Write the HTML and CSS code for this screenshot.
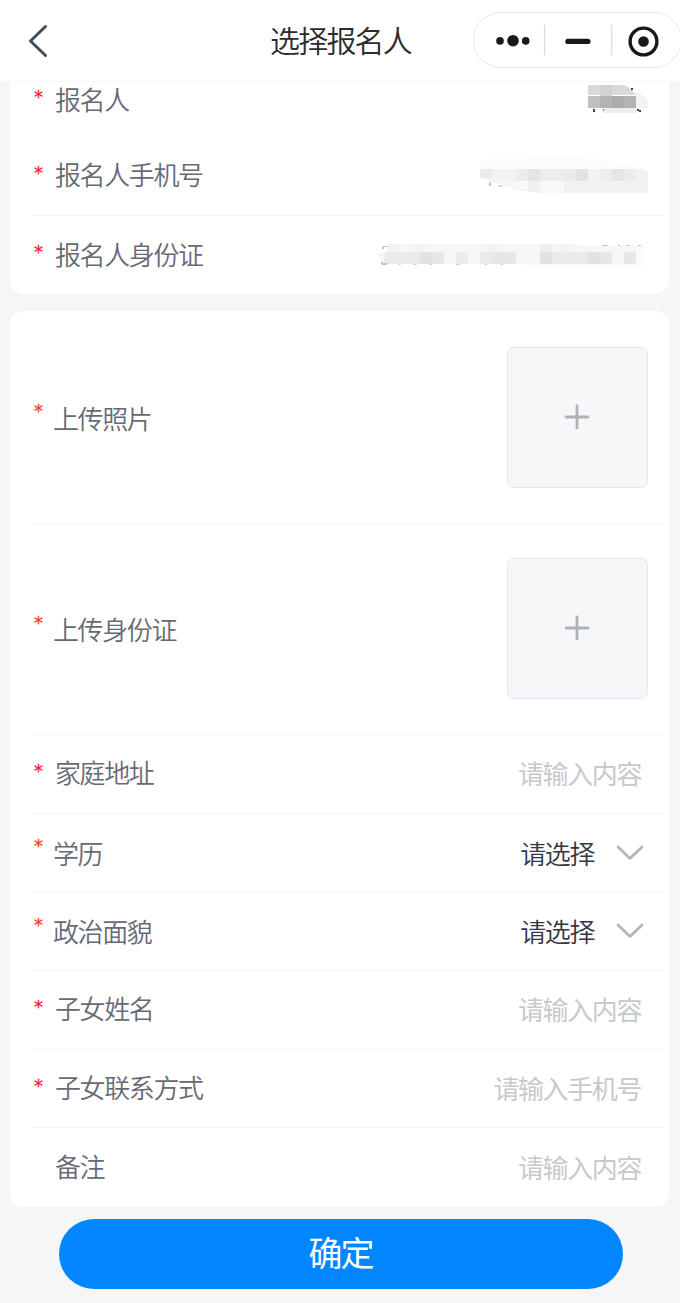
FILE: index.html
```html
<!DOCTYPE html>
<html lang="zh-CN">
<head>
<meta charset="utf-8">
<title>选择报名人</title>
<link rel="stylesheet" href="styles.css">
</head>
<body>
<header class="navbar">
  <svg class="back" width="22" height="36" viewBox="0 0 22 36" fill="none"><path d="M18.5 3.5 3.5 18 18.5 32.5" stroke="#414c5b" stroke-width="3" stroke-linecap="round" stroke-linejoin="round"/></svg>
  <h1 class="title">选择报名人</h1>
  <div class="capsule">
    <svg width="210" height="56" viewBox="0 0 210 56">
      <rect x=".5" y=".5" width="208" height="55" rx="27.5" fill="#fff" stroke="#e9e9e9"/>
      <g fill="#191919"><circle cx="27" cy="28.9" r="3.8"/><circle cx="40" cy="28.7" r="5.8"/><circle cx="52.7" cy="28.9" r="3.8"/><rect x="92.3" y="26.8" width="25.2" height="5.2" rx="2.6"/><circle cx="170.5" cy="29.5" r="5.3"/></g>
      <path d="M71.5 13v30M138.7 13v30" stroke="#d9d9d9" stroke-width="1.2"/>
      <circle cx="170.5" cy="29.5" r="13.4" fill="none" stroke="#191919" stroke-width="3.4"/>
    </svg>
  </div>
</header>
<main class="page">
  <section class="card card-top">
    <div class="row row-first"><span class="star">*</span><span class="label">报名人</span>
      <svg class="mask mask-name" width="60" height="30" viewBox="0 0 60 30" shape-rendering="crispEdges">
        <path d="M0 1h36l6 3 6 7H0z" fill="#d9d9d9"/><path d="M12 1h12v11H12z" fill="#d2d2d2"/><path d="M48 8l8 4 4 6v6H48z" fill="#f3f3f3"/>
        <path d="M0 12h12v12H0z" fill="#c0c0c0"/><path d="M12 12h12v12H12zM36 12h12v12H36z" fill="#b3b3b3"/><path d="M24 12h12v12H24z" fill="#adadad"/>
        <path d="M16 24h33v5H16z" fill="#ededed"/><path d="M5 25h2v3H5zM43 4h2v2h-2zM49 25h2v1h2v2h-2v-1h-2z" fill="#444"/><path d="M15 25h1v2h-1z" fill="#777"/>
      </svg>
    </div>
    <div class="row row-phone"><span class="star">*</span><span class="label">报名人手机号</span>
      <svg class="mask mask-phone" width="168" height="38" viewBox="0 0 168 38" shape-rendering="crispEdges">
        <path d="M0 13V7l5-4 45-1 6-2h30l36 3 6 3 36 5v2z" fill="#fcfcfc"/>
        <path d="M0 13h162l6 3v21H60l-22-3-18-6-13-4-7-2z" fill="#f1f2f2"/>
        <path d="M0 13h12v9H0zM84 13h12v12H84z" fill="#ebebeb"/><path d="M36 13h12v12H36zM144 13h12v12h-12z" fill="#ececec"/><path d="M48 13h12v12H48zM132 13h12v12h-12z" fill="#e5e5e6"/><path d="M60 13h24v12H60zM120 13h12v12h-12z" fill="#ebedee"/><path d="M96 13h12v12H96z" fill="#e2e3e6"/>
        <path d="M20 25h28v9l-12-2-14-5zM60 25h24v12H60z" fill="#f8f8f8"/><path d="M48 25h12v12l-12-2z" fill="#eef1f0"/>
        <path d="M9 26h2v4H9z" fill="#c4c5cb"/><path d="M18 29h3v1h2v1h-4z" fill="#d6d7da"/>
      </svg>
    </div>
    <div class="row row-id"><span class="star">*</span><span class="label">报名人身份证</span>
      <svg class="mask mask-id" width="268" height="25" viewBox="0 0 268 25" shape-rendering="crispEdges">
        <path d="M10 1h190l3 2h64v20H148v-2H10l-7-5-3-6h10z" fill="#f5f6f6"/>
        <path d="M7 9h36v12H7z" fill="#eaebec"/><path d="M10 1h9v8h-9zM36 1h12v8H36zM108 1h12v8h-12zM180 1h12v8h-12z" fill="#f1f2f2"/><path d="M163 1h12v8h-12z" fill="#eeeeef"/>
        <path d="M43 9h12v12H43zM163 9h12v12h-12zM211 9h12v12h-12z" fill="#e1e2e5"/><path d="M55 9h12v12H55zM115 9h24v12h-24zM223 9h12v12h-12zM247 9h12v12h-12z" fill="#e6e7e9"/><path d="M79 9h12v12H79zM103 9h12v12h-12zM175 9h36v12h-36z" fill="#ebebed"/><path d="M148 21h119v4H148z" fill="#fbfbfb"/><path d="M259 4h8v18h-8z" fill="#fafafa"/>
        <path d="M6 3h4v1H7v2H5V4zM4 19h2v1h4v2H5zM225 2h6v1h-6zM241 2h2v1h-2zM249 2h3v1h-3zM261 2h3v1h-3z" fill="#bfc0c5"/><path d="M21 21h3v1h-3zM36 21h4v1h-4zM52 21h3v1h-3zM79 21h4v1h-4zM107 21h3v1h-3zM123 21h3v1h-3z" fill="#d4d4d7"/>
      </svg>
    </div>
  </section>
  <section class="card card-form">
    <div class="row upload-row upload-photo alt"><span class="star">*</span><span class="label">上传照片</span><div class="upload"><svg width="26" height="26" viewBox="0 0 26 26"><path d="M13 2v22M2 13h22" stroke="#afb3b7" stroke-width="2.8" stroke-linecap="round"/></svg></div></div>
    <div class="row upload-row alt"><span class="star">*</span><span class="label">上传身份证</span><div class="upload"><svg width="26" height="26" viewBox="0 0 26 26"><path d="M13 2v22M2 13h22" stroke="#afb3b7" stroke-width="2.8" stroke-linecap="round"/></svg></div></div>
    <div class="row"><span class="star">*</span><span class="label">家庭地址</span><span class="placeholder">请输入内容</span></div>
    <div class="row select-row alt"><span class="star">*</span><span class="label">学历</span><span class="choice">请选择</span><svg class="chevron" width="28" height="18" viewBox="0 0 28 18"><path d="M2 3 14 14.5 26 3" fill="none" stroke="#b5b6b8" stroke-width="2.8" stroke-linecap="round" stroke-linejoin="round"/></svg></div>
    <div class="row select-row alt"><span class="star">*</span><span class="label">政治面貌</span><span class="choice">请选择</span><svg class="chevron" width="28" height="18" viewBox="0 0 28 18"><path d="M2 3 14 14.5 26 3" fill="none" stroke="#b5b6b8" stroke-width="2.8" stroke-linecap="round" stroke-linejoin="round"/></svg></div>
    <div class="row"><span class="star">*</span><span class="label">子女姓名</span><span class="placeholder">请输入内容</span></div>
    <div class="row"><span class="star">*</span><span class="label">子女联系方式</span><span class="placeholder">请输入手机号</span></div>
    <div class="row"><span class="star"></span><span class="label">备注</span><span class="placeholder">请输入内容</span></div>
  </section>
  <button class="confirm">确定</button>
</main>
</body>
</html>
```

FILE: styles.css
```css
* { box-sizing: border-box; }
body {
  margin: 0;
  height: 1303px;
  overflow: hidden;
  background: #f4f6f8;
  font-family: "Noto Sans CJK SC", sans-serif;
  font-weight: 350;
}
.navbar {
  display: grid;
  grid-template-columns: 270px 1fr 207px;
  height: 82px;
  align-items: center;
  background: #fff;
  border-bottom: 1px solid #f5f7f9;
  overflow: hidden;
}
.back { margin-left: 27px; }
.title {
  margin: -4px 0 0;
  font-size: 30px;
  font-weight: 350;
  line-height: 40px;
  letter-spacing: -1.8px;
  color: #2c2c2c;
  white-space: nowrap;
}
.capsule { height: 56px; margin-top: -1px; }
.capsule svg { display: block; }
.page { display: flex; flex-direction: column; padding: 0 11px 0 10px; }
.card {
  padding-left: 21px;
  border-radius: 14px;
  background: #fff;
}
.card-top { height: 212px; margin-bottom: 17px; border-radius: 0 0 14px 14px; }
.card-form { height: 896px; }
.row {
  display: flex;
  align-items: center;
  height: 78.7px;
  padding-right: 28px;
  border-bottom: 1px solid #f5f6f7;
  font-size: 26px;
  line-height: 36px;
  letter-spacing: -1.4px;
  white-space: nowrap;
}
.row:last-child { border-bottom: 0; }
.star {
  width: 24px;
  padding-left: 3px;
  margin-top: -6px;
  font: 18px/36px "DejaVu Sans", sans-serif;
  color: #f5203c;
  -webkit-text-stroke: 0.3px currentColor;
}
.alt .star { width: 22px; margin-top: -13px; color: #f0432a; }
.label { flex: 1; margin-top: -3px; color: #666a75; }
.alt .label { margin-top: 0; }
.placeholder { color: #c8c9cc; font-weight: 400; margin-top: -1px; }
.row-first { height: 54px; border-bottom: 0; padding: 0 21px 18px 0; }
.row-phone { height: 80px; padding-right: 21px; }
.row-id { height: 78px; }
.mask-name { margin-top: -3px; }
.mask-phone { margin-top: -2px; }
.mask-id { margin-right: -4px; }
.upload-row { height: 211px; padding-right: 21px; }
.upload-photo { height: 213px; }
.alt.upload-photo .label { margin-top: 2px; }
.upload {
  display: flex;
  align-items: center;
  justify-content: center;
  width: 141px;
  height: 141px;
  margin-top: -2px;
  padding-right: 2px;
  border: 1px solid #e4e8ec;
  border-radius: 7px;
  background: #f5f7f9;
}
.upload-photo .upload { margin-top: 0; }
.select-row { padding-right: 25px; }
.choice { color: #333744; margin-right: 22px; }
.confirm {
  align-self: center;
  width: 564px;
  height: 70px;
  margin: 12px 0 0 2px;
  padding: 0 0 4px;
  border: 0;
  border-radius: 35px;
  background: #0086ff;
  color: #fff;
  font: 400 34px/66px "Noto Sans CJK SC", sans-serif;
  letter-spacing: -2px;
}
```
